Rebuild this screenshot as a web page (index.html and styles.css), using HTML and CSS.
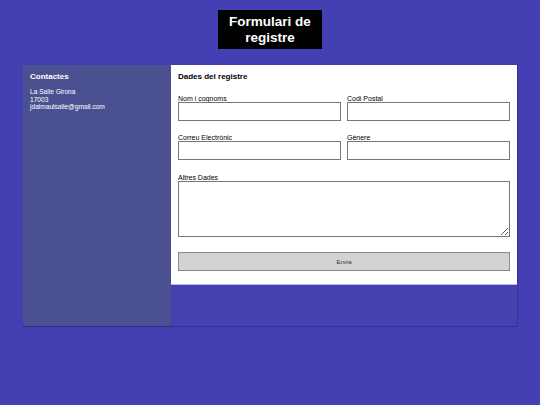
FILE: index.html
```html
<!DOCTYPE html>
<html lang="ca">
<head>
<meta charset="utf-8">
<title>Formulari de registre</title>
<link rel="stylesheet" href="styles.css">
</head>
<body>
<header class="top">
  <h1 class="title">Formulari de registre</h1>
</header>
<main class="wrap">
  <aside class="side">
    <h3 class="side-title">Contactes</h3>
    <p class="side-text">La Salle Girona<br>17003<br>jdalmaulsalle@gmail.com</p>
  </aside>
  <section class="panel">
    <h2 class="panel-title">Dades del registre</h2>
    <form class="form">
      <div class="field">
        <label class="lbl" for="nom">Nom i cognoms</label>
        <input class="inp" id="nom" type="text">
      </div>
      <div class="field">
        <label class="lbl" for="cp">Codi Postal</label>
        <input class="inp" id="cp" type="text">
      </div>
      <div class="field">
        <label class="lbl" for="mail">Correu Electrònic</label>
        <input class="inp" id="mail" type="email">
      </div>
      <div class="field">
        <label class="lbl" for="gen">Gènere</label>
        <input class="inp" id="gen" type="text">
      </div>
      <div class="field wide area">
        <label class="lbl" for="altres">Altres Dades</label>
        <textarea class="txt" id="altres"></textarea>
      </div>
      <button class="btn wide" type="button">Envia</button>
    </form>
  </section>
</main>
</body>
</html>
```

FILE: styles.css
```css
* { box-sizing: border-box; }
html, body { margin: 0; padding: 0; }
body {
  background: #4440b4;
  font-family: "Liberation Sans", Arial, sans-serif;
  width: 540px;
  height: 405px;
  overflow: hidden;
}
.top {
  display: flex;
  justify-content: center;
  padding-top: 10px;
}
.title {
  margin: 0;
  background: #000;
  color: #fff;
  width: 104px;
  height: 39px;
  font-size: 13.5px;
  line-height: 16px;
  font-weight: bold;
  text-align: center;
  padding-top: 4px;
}
.wrap {
  display: flex;
  margin: 16px 0 0 23px;
  width: 494px;
  height: 261px;
  background: #4541b0;
  box-shadow: 0 1px 1px rgba(40, 40, 110, 0.6), 1px 0 1px rgba(40, 40, 110, 0.4);
}
.side {
  width: 148px;
  background: #4b5090;
  color: #fff;
  padding: 7px 7px;
}
.side-title {
  margin: 0;
  font-size: 8px;
  line-height: 9px;
  font-weight: bold;
}
.side-text {
  margin: 7px 0 0;
  font-size: 6.6px;
  line-height: 7.5px;
}
.panel {
  width: 346px;
  height: 220px;
  background: #fff;
  padding: 7px 7px;
  border-bottom: 1px solid #b9b7ee;
}
.panel-title {
  margin: 0;
  font-size: 8px;
  line-height: 9px;
  font-weight: bold;
  color: #000;
}
.form {
  display: grid;
  grid-template-columns: 163px 163px;
  column-gap: 6px;
  row-gap: 13px;
  margin-top: 14px;
}
.field { display: flex; flex-direction: column; }
.wide { grid-column: 1 / span 2; }
.area { margin-top: 1px; }
.lbl {
  font-size: 7px;
  line-height: 7px;
  color: #000;
}
.inp {
  height: 19px;
  margin: 0;
  border: 1px solid #767676;
  background: #fff;
  padding: 0 2px;
}
.txt {
  height: 56px;
  margin: 0;
  border: 1px solid #767676;
  resize: vertical;
}
.btn {
  margin-top: 2px;
  height: 19px;
  background: #d3d3d3;
  border: 1px solid #8a8a8a;
  font-family: "Liberation Sans", Arial, sans-serif;
  font-size: 6px;
  color: #333;
}
```
